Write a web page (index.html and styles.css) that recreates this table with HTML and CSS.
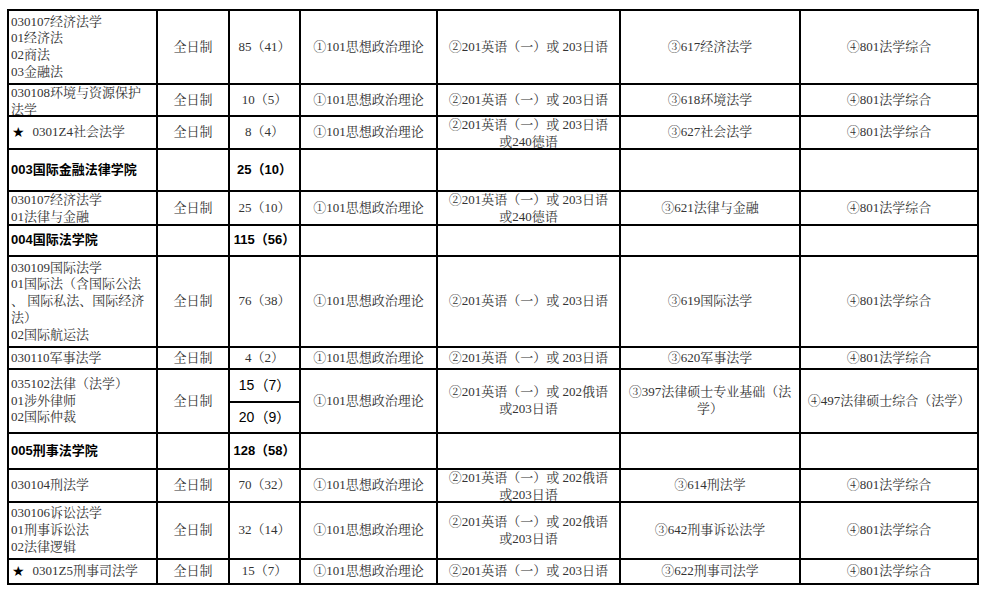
FILE: index.html
```html
<!DOCTYPE html>
<html lang="zh-CN">
<head>
<meta charset="utf-8">
<link rel="stylesheet" href="styles.css">
</head>
<body>
<div class="page">
<div class="grid">
  <!-- r1 -->
  <div class="c l">030107经济法学<br>01经济法<br>02商法<br>03金融法</div>
  <div class="c">全日制</div>
  <div class="c">85（41）</div>
  <div class="c">①101思想政治理论</div>
  <div class="c">②201英语（一）或 203日语</div>
  <div class="c">③617经济法学</div>
  <div class="c">④801法学综合</div>
  <!-- r2 -->
  <div class="c l">030108环境与资源保护<br>法学</div>
  <div class="c">全日制</div>
  <div class="c">10（5）</div>
  <div class="c">①101思想政治理论</div>
  <div class="c">②201英语（一）或 203日语</div>
  <div class="c">③618环境法学</div>
  <div class="c">④801法学综合</div>
  <!-- r3 -->
  <div class="c l"><span class="star">★</span>0301Z4社会法学</div>
  <div class="c">全日制</div>
  <div class="c">8（4）</div>
  <div class="c">①101思想政治理论</div>
  <div class="c">②201英语（一）或 203日语<br>或240德语</div>
  <div class="c">③627社会法学</div>
  <div class="c">④801法学综合</div>
  <!-- r4 -->
  <div class="c l b">003国际金融法律学院</div>
  <div class="c"></div>
  <div class="c b">25（10）</div>
  <div class="c"></div>
  <div class="c"></div>
  <div class="c"></div>
  <div class="c"></div>
  <!-- r5 -->
  <div class="c l">030107经济法学<br>01法律与金融</div>
  <div class="c">全日制</div>
  <div class="c">25（10）</div>
  <div class="c">①101思想政治理论</div>
  <div class="c">②201英语（一）或 203日语<br>或240德语</div>
  <div class="c">③621法律与金融</div>
  <div class="c">④801法学综合</div>
  <!-- r6 -->
  <div class="c l b">004国际法学院</div>
  <div class="c"></div>
  <div class="c b">115（56）</div>
  <div class="c"></div>
  <div class="c"></div>
  <div class="c"></div>
  <div class="c"></div>
  <!-- r7 -->
  <div class="c l">030109国际法学<br>01国际法（含国际公法<br>、 国际私法、国际经济<br>法）<br>02国际航运法</div>
  <div class="c">全日制</div>
  <div class="c">76（38）</div>
  <div class="c">①101思想政治理论</div>
  <div class="c">②201英语（一）或 203日语</div>
  <div class="c">③619国际法学</div>
  <div class="c">④801法学综合</div>
  <!-- r8 -->
  <div class="c l">030110军事法学</div>
  <div class="c">全日制</div>
  <div class="c">4（2）</div>
  <div class="c">①101思想政治理论</div>
  <div class="c">②201英语（一）或 203日语</div>
  <div class="c">③620军事法学</div>
  <div class="c">④801法学综合</div>
  <!-- r9 (two sub rows) -->
  <div class="c l span2">035102法律（法学）<br>01涉外律师<br>02国际仲裁</div>
  <div class="c span2">全日制</div>
  <div class="c s">15（7）</div>
  <div class="c span2">①101思想政治理论</div>
  <div class="c span2">②201英语（一）或 202俄语<br>或203日语</div>
  <div class="c span2">③397法律硕士专业基础（法<br>学）</div>
  <div class="c span2">④497法律硕士综合（法学）</div>
  <div class="c s">20（9）</div>
  <!-- r10 -->
  <div class="c l b">005刑事法学院</div>
  <div class="c"></div>
  <div class="c b">128（58）</div>
  <div class="c"></div>
  <div class="c"></div>
  <div class="c"></div>
  <div class="c"></div>
  <!-- r11 -->
  <div class="c l">030104刑法学</div>
  <div class="c">全日制</div>
  <div class="c">70（32）</div>
  <div class="c">①101思想政治理论</div>
  <div class="c">②201英语（一）或 202俄语<br>或203日语</div>
  <div class="c">③614刑法学</div>
  <div class="c">④801法学综合</div>
  <!-- r12 -->
  <div class="c l">030106诉讼法学<br>01刑事诉讼法<br>02法律逻辑</div>
  <div class="c">全日制</div>
  <div class="c">32（14）</div>
  <div class="c">①101思想政治理论</div>
  <div class="c">②201英语（一）或 202俄语<br>或203日语</div>
  <div class="c">③642刑事诉讼法学</div>
  <div class="c">④801法学综合</div>
  <!-- r13 -->
  <div class="c l"><span class="star">★</span>0301Z5刑事司法学</div>
  <div class="c">全日制</div>
  <div class="c">15（7）</div>
  <div class="c">①101思想政治理论</div>
  <div class="c">②201英语（一）或 203日语</div>
  <div class="c">③622刑事司法学</div>
  <div class="c">④801法学综合</div>
</div>
</div>
</body>
</html>
```
FILE: styles.css
```css
html, body {
  margin: 0;
  padding: 0;
  background: #fff;
}
.page {
  padding: 9px 0 0 7px;
}
.grid {
  display: grid;
  width: 968px;
  grid-template-columns: 147px 70px 69px 135px 181px 178px 176px;
  grid-template-rows: 72px 30px 31px 40px 32px 29px 89px 20px 31px 29px 34px 31px 55px 23px;
  gap: 2px;
  padding: 2px;
  background: #000;
}
.c {
  background: #fff;
  display: flex;
  align-items: safe center;
  justify-content: center;
  text-align: center;
  overflow: hidden;
  white-space: nowrap;
  padding: 0 2px;
  font-family: "Liberation Serif", "Noto Serif CJK SC", "Noto Sans CJK SC", serif;
  font-size: 13px;
  line-height: 16.67px;
  color: #333;
}
.c.l {
  justify-content: flex-start;
  text-align: left;
}
.c.b {
  font-family: "Liberation Sans", "Noto Sans CJK SC", sans-serif;
  font-weight: bold;
  color: #000;
}
.c.s {
  font-family: "Liberation Sans", "Noto Sans CJK SC", sans-serif;
  color: #000;
  font-size: 14px;
}
.span2 {
  grid-row: span 2;
}
.star {
  color: #000;
  font-family: "DejaVu Sans", sans-serif;
  font-size: 14px;
  margin: 0 8px 0 1px;
}
```
